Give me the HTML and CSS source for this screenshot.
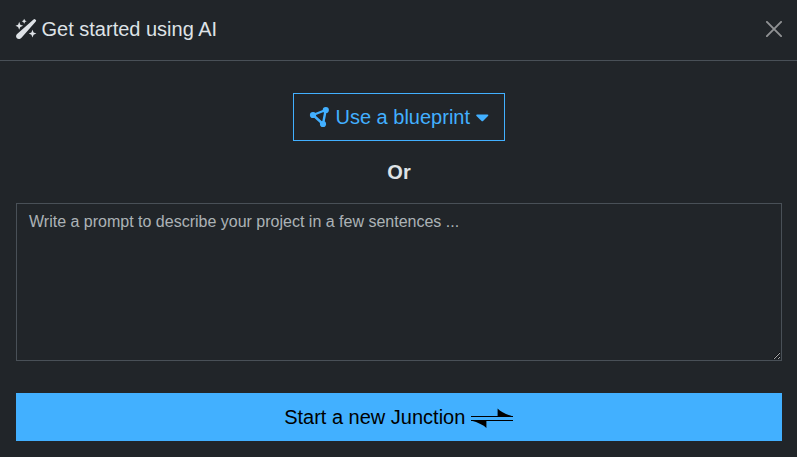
FILE: index.html
```
<!DOCTYPE html>
<html lang="en">
<head>
<meta charset="utf-8">
<title>Get started using AI</title>
<link rel="stylesheet" href="styles.css">
</head>
<body>
<header class="header">
  <h1 class="title">
    <svg class="icon" viewBox="0 0 20 20" fill="currentColor"><path d="M18.600.1 20.200 1.300 19.800 2.500 5.500 18.700C4 20.400 2 20.300 .9 19.200S-.3 16.300 1.100 15L17.500.4ZM3.200 2.700 4.300 5.700 7.200 6.800 4.300 7.900 3.200 10.800 2.100 7.900-.5 6.800 2.100 5.700ZM8.200-.2 9 1.400 10.600 2.200 9 3 8.200 4.700 7.300 3 5.700 2.200 7.300 1.400ZM16.500 10.800 17.600 13.500 20.400 14.600 17.600 15.700 16.500 18.400 15.400 15.700 12.800 14.600 15.400 13.500Z"/></svg>
    <span>Get started using AI</span>
  </h1>
  <button class="close" aria-label="Close"><svg viewBox="0 0 16 16" width="16" height="16"><path d="M.9.9 15.100 15.100M15.100.9.9 15.100" fill="none" stroke="currentColor" stroke-width="1.900" stroke-linecap="round"/></svg></button>
</header>
<main class="content">
  <button class="blueprint">
    <svg class="icon" viewBox="0 0 20 20"><path d="M3 8 15.700 3 13 17Z" fill="none" stroke="currentColor" stroke-width="2.400" stroke-linejoin="round"/><g fill="currentColor"><circle cx="3" cy="8" r="3.100"/><circle cx="15.800" cy="3" r="3.100"/><circle cx="13" cy="17" r="3.100"/></g></svg>
    <span>Use a blueprint</span>
    <svg class="caret" viewBox="0 0 13 8"><path d="M1.200.5H11.300Q13 .5 12 2L7.300 6.800Q6.300 7.800 5.300 6.800L.5 2Q-.4.500 1.200.5Z" fill="currentColor"/></svg>
  </button>
  <strong class="or">Or</strong>
  <textarea class="prompt" placeholder="Write a prompt to describe your project in a few sentences ..."></textarea>
  <button class="start">
    <span>Start a new Junction</span>
    <svg class="arrows" viewBox="0 0 43 20"><path d="M0 9H42V10H0ZM0 13H42V14H0Z"/><path d="M26.600 1.500Q31 6.200 42 9.500H26.600ZM15.400 21Q11 16.500 0 13.500H15.400Z"/></svg>
  </button>
</main>
</body>
</html>
```
FILE: styles.css
```
* { box-sizing: border-box; }
body {
  margin: 0;
  min-height: 100vh;
  background: #212529;
  color: #dee2e6;
  font: 20px/1.5 "Liberation Sans", Arial, sans-serif;
}
button { font: inherit; border-radius: 0; }
.header {
  height: 61px;
  padding: 0 15px 3px 16px;
  border-bottom: 1px solid #495057;
  display: flex;
  align-items: center;
  justify-content: space-between;
}
.title {
  margin: 0;
  font-size: 20px;
  font-weight: 400;
  display: flex;
  align-items: center;
  gap: 5.5px;
}
.icon { width: 20px; height: 20px; flex: none; overflow: visible; }
.close {
  display: flex;
  padding: 0;
  border: 0;
  background: none;
  color: #909294;
}
.content {
  padding: 32px 15px 16px 16px;
  display: flex;
  flex-direction: column;
  align-items: center;
}
.blueprint {
  width: 212px;
  height: 48px;
  padding: 0 15px 0 16px;
  border: 1px solid #42b0ff;
  background: transparent;
  color: #42b0ff;
  display: flex;
  align-items: center;
  gap: 5.5px;
}
.caret { width: 13px; height: 8px; flex: none; margin-top: 1px; }
.or { margin: 16px 0; }
.prompt {
  display: block;
  width: 100%;
  height: 158px;
  padding: 6px 12px;
  border: 1px solid #495057;
  border-radius: 0;
  background: #212529;
  color: #dee2e6;
  font: 16px/1.5 "Liberation Sans", Arial, sans-serif;
  resize: vertical;
}
.prompt::placeholder { color: rgba(222, 226, 230, .75); }
.start {
  width: 100%;
  height: 48px;
  margin-top: 32px;
  padding: 0;
  border: 0;
  background: #42b0ff;
  color: #000;
  display: flex;
  align-items: center;
  justify-content: center;
  gap: 5.5px;
}
.arrows { width: 43px; height: 20px; flex: none; overflow: visible; }
```
